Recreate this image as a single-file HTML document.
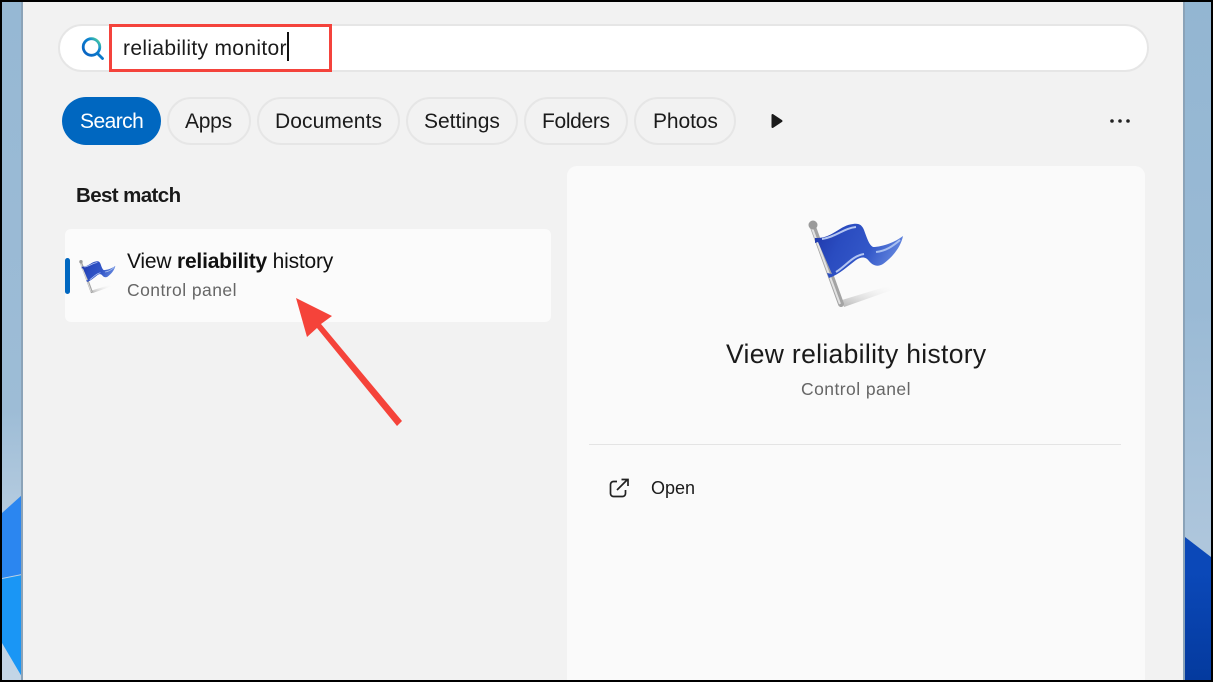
<!DOCTYPE html>
<html><head><meta charset="utf-8"><style>
html,body{margin:0;padding:0}
body{width:1213px;height:682px;overflow:hidden;position:relative;background:#000;font-family:"Liberation Sans",sans-serif;color:#1b1b1b}
.a{position:absolute}
.t{position:absolute;white-space:nowrap;line-height:1}
.chip{position:absolute;top:97px;height:44px;border:2px solid #e6e6e6;border-radius:24px;background:#f2f2f2}
.c{top:111px;font-size:21px}
</style></head><body>
<div class="a" style="left:2px;top:2px;width:1209px;height:678px;background:#98b9d3"></div>
<div class="a" style="left:2px;top:2px;width:20px;height:678px;background:linear-gradient(#96b8d4 0,#9dbcd6 60%,#bcd0e2 80%,#c3d5e6 100%)"></div>
<svg class="a" style="left:2px;top:480px" width="20" height="200"><polygon points="0,33 20,15 20,94 0,98" fill="#2b86f0"/><polygon points="0,99 20,95 20,197 0,163" fill="#1a96f5"/></svg>
<div class="a" style="left:1185px;top:2px;width:26px;height:678px;background:linear-gradient(#93b6d2 0,#9abad5 45%,#aec6dc 80%,#aec6dc 100%)"></div>
<svg class="a" style="left:1185px;top:480px" width="26" height="200"><defs><linearGradient id="rb" x1="0" y1="0" x2="0" y2="1"><stop offset=".25" stop-color="#0b48b8"/><stop offset="1" stop-color="#043a9e"/></linearGradient></defs><polygon points="0,57 26,77 26,200 0,200" fill="url(#rb)"/></svg>
<div class="a" style="left:21px;top:2px;width:2px;height:678px;background:#8ba3b8"></div>
<div class="a" style="left:1183px;top:2px;width:2px;height:678px;background:#8ba3b8"></div>
<div class="a" style="left:23px;top:2px;width:1160px;height:678px;background:#f2f2f2"></div>

<div class="a" style="left:58px;top:24px;width:1087px;height:44px;background:#fff;border:2px solid #e6e6e6;border-radius:24px"></div>
<svg class="a" style="left:80px;top:35px" width="26" height="26" viewBox="0 0 26 26"><defs><linearGradient id="g" x1="0" y1="1" x2="1" y2="0"><stop offset="0" stop-color="#0a5fc0"/><stop offset=".65" stop-color="#0c82d0"/><stop offset=".85" stop-color="#38b8b0"/><stop offset="1" stop-color="#6ad87a"/></linearGradient></defs><circle cx="11.500" cy="12" r="8.300" fill="none" stroke="url(#g)" stroke-width="2.800"/><path d="M17.500 18.500l5 5" stroke="#0a78c8" stroke-width="2.800" stroke-linecap="round"/></svg>
<div class="a" style="left:109px;top:24px;width:217px;height:42px;border:3px solid #f4433c"></div>
<div class="t" style="left:123px;top:38px;font-size:21px;letter-spacing:.33px">reliability monitor</div>
<div class="a" style="left:287px;top:32px;width:2px;height:29px;background:#111"></div>

<div class="a" style="left:62px;top:97px;width:99px;height:48px;background:#0067c0;border-radius:24px"></div>
<div class="t c" style="left:80px;color:#fff;letter-spacing:-.55px">Search</div>
<div class="chip" style="left:167px;width:80px"></div><div class="t c" style="left:185px;letter-spacing:-.25px">Apps</div>
<div class="chip" style="left:257px;width:139px"></div><div class="t c" style="left:275px;letter-spacing:.1px">Documents</div>
<div class="chip" style="left:406px;width:108px"></div><div class="t c" style="left:424px">Settings</div>
<div class="chip" style="left:524px;width:100px"></div><div class="t c" style="left:542px;letter-spacing:-.33px">Folders</div>
<div class="chip" style="left:634px;width:98px"></div><div class="t c" style="left:653px;letter-spacing:-.1px">Photos</div>
<svg class="a" style="left:770px;top:112px" width="14" height="18"><path d="M2.500 3v12l9-6z" fill="#1b1b1b" stroke="#1b1b1b" stroke-width="2" stroke-linejoin="round"/></svg>
<svg class="a" style="left:1108px;top:116px" width="24" height="10"><circle cx="4" cy="5" r="1.800" fill="#222"/><circle cx="12" cy="5" r="1.800" fill="#222"/><circle cx="20" cy="5" r="1.800" fill="#222"/></svg>

<div class="t" style="left:76px;top:186px;font-size:20.500px;font-weight:bold;letter-spacing:-.6px;color:#1a1a1a">Best match</div>
<div class="a" style="left:65px;top:229px;width:486px;height:93px;background:#fbfbfb;border-radius:6px"></div>
<div class="a" style="left:65px;top:258px;width:5px;height:36px;background:#0067c0;border-radius:3px"></div>
<svg class="a" style="left:72px;top:256px" width="50" height="42" viewBox="0 0 130 110"><use href="#flag"/></svg>
<div class="t" style="left:127px;top:251px;font-size:21px;color:#111;letter-spacing:-.2px">View <b>reliability</b> history</div>
<div class="t" style="left:127px;top:282px;font-size:17.500px;color:#666;letter-spacing:.45px">Control panel</div>

<div class="a" style="left:567px;top:166px;width:578px;height:514px;background:#fafafa;border-radius:10px 10px 0 0"></div>
<svg class="a" style="left:790px;top:210px" width="130" height="110" viewBox="0 0 130 110">
<defs><linearGradient id="fl" x1="0" y1="0" x2="1" y2=".3"><stop offset="0" stop-color="#1f36a8"/><stop offset=".35" stop-color="#2a4cc0"/><stop offset=".7" stop-color="#3357c8"/><stop offset="1" stop-color="#5f82dc"/></linearGradient><linearGradient id="sh" x1="0" y1="1" x2="1" y2="0"><stop offset="0" stop-color="#b5b5b5"/><stop offset="1" stop-color="#f5f5f5" stop-opacity="0"/></linearGradient>
<g id="flag"><polygon points="52,90 98,76 102,80 54,97" fill="url(#sh)"/><path d="M23 17L51 94" stroke="#a4a4a4" stroke-width="6" stroke-linecap="round"/><path d="M22 18L50 94" stroke="#e2e2e2" stroke-width="2"/><circle cx="23" cy="15" r="4.500" fill="#9a9a9a"/><path d="M25 28C42 29 50 15 63 14C69 13 72 15 74 20C77 28 79 35 83 37C91 37 104 33 113 26C111 36 104 46 93 54C88 57 83 56 79 51C76 47 72 46 66 50C58 56 50 64 39 68L37 63L42 64L28 32L25 33Z" fill="url(#fl)"/><path d="M32 29C46 27 54 18 66 17" stroke="#b4c6f2" stroke-width="2" fill="none"/><path d="M46 62C56 56 62 46 74 44" stroke="#b4c6f2" stroke-width="2" fill="none"/><path d="M86 42C96 41 103 36 110 30" stroke="#a9c0f0" stroke-width="2" fill="none"/></g></defs>
<use href="#flag"/></svg>
<div class="t" style="left:726px;top:341px;font-size:26.500px;color:#1a1a1a;letter-spacing:.32px">View reliability history</div>
<div class="t" style="left:801px;top:381px;font-size:17.500px;color:#666;letter-spacing:.45px">Control panel</div>
<div class="a" style="left:589px;top:444px;width:532px;height:1px;background:#e4e4e4"></div>
<svg class="a" style="left:608px;top:477px" width="22" height="22" viewBox="0 0 22 22" fill="none" stroke="#222" stroke-width="1.700"><path d="M9 4.500H5.500a3 3 0 0 0-3 3v9a3 3 0 0 0 3 3h9a3 3 0 0 0 3-3V13"/><path d="M9 13L19.500 2.500M13.500 2.500h6.500V9"/></svg>
<div class="t" style="left:651px;top:479px;font-size:18px;color:#1a1a1a">Open</div>

<svg class="a" style="left:280px;top:285px" width="130" height="150"><polygon points="16,13 52,31 41,39 122,136 117,141 37,43 27,52" fill="#f5433a"/></svg>
</body></html>
